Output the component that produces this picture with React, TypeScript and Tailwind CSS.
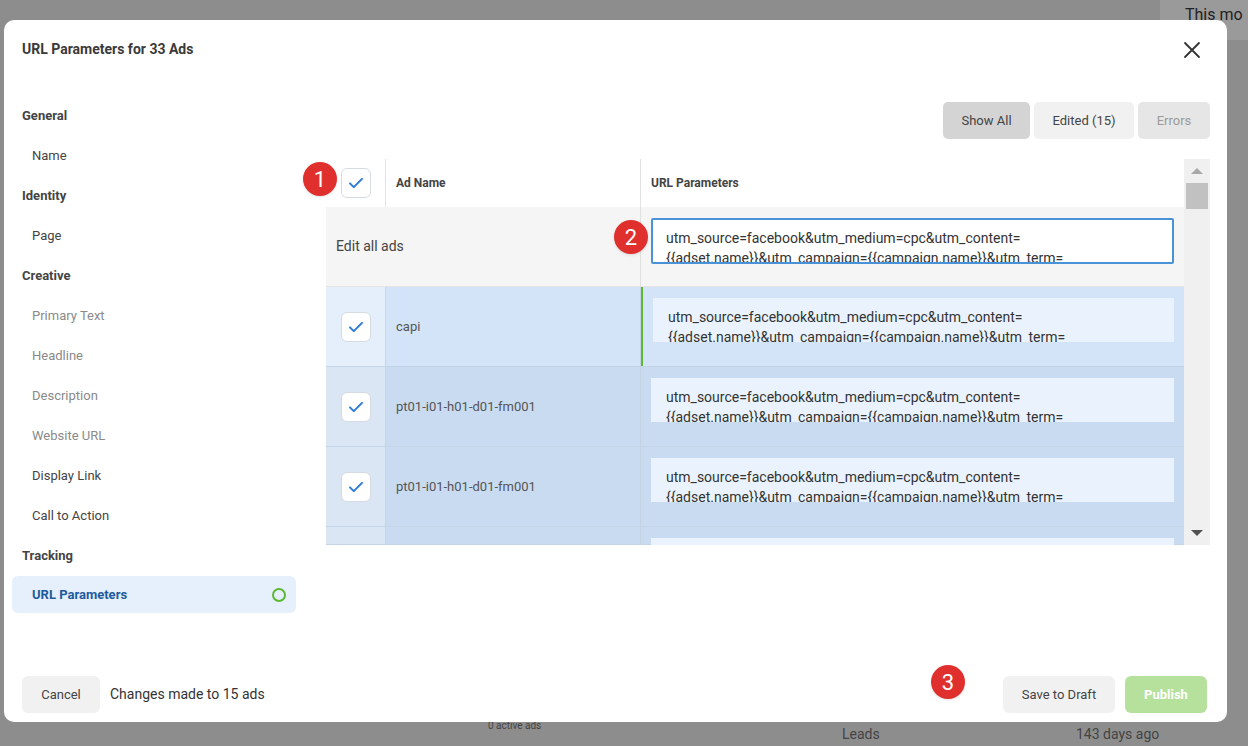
import React from 'react';

const URL_TEXT1 = 'utm_source=facebook&utm_medium=cpc&utm_content=';
const URL_TEXT2 = '{{adset.name}}&utm_campaign={{campaign.name}}&utm_term=';

function Check() {
  return (
    <div className="w-[30px] h-[30px] rounded-[6px] bg-white border border-[#d6dbe2] flex items-center justify-center">
      <svg width="18" height="18" viewBox="0 0 24 24" fill="none" stroke="#2b7bd6" strokeWidth="2.6" strokeLinecap="round" strokeLinejoin="round">
        <path d="M4 12.5l5 5L20 6.5" />
      </svg>
    </div>
  );
}

function Badge({ n, className }: { n: number; className: string }) {
  return (
    <div className={`absolute w-[34px] h-[34px] rounded-full bg-[#e0302e] text-white text-[22px] flex items-center justify-center shadow ${className}`}>
      {n}
    </div>
  );
}

const nav: { head: string; items: { label: string; dim?: boolean }[] }[] = [
  { head: 'General', items: [{ label: 'Name' }] },
  { head: 'Identity', items: [{ label: 'Page' }] },
  {
    head: 'Creative',
    items: [
      { label: 'Primary Text', dim: true },
      { label: 'Headline', dim: true },
      { label: 'Description', dim: true },
      { label: 'Website URL', dim: true },
      { label: 'Display Link' },
      { label: 'Call to Action' },
    ],
  },
];

function Row({ name, first, last }: { name: string; first?: boolean; last?: boolean }) {
  return (
    <div className={`flex ${last ? 'h-[18px]' : 'h-[80px]'} border-b border-[#c5d5e8]`}>
      <div className={`w-[60px] flex items-center justify-center border-r border-[#c9d6e6] ${first ? 'bg-[#e4effb]' : 'bg-[#dae6f4]'}`}>
        {!last && <Check />}
      </div>
      <div className={`w-[255px] flex items-center pl-[10px] text-[13px] text-[#555] border-r border-[#c5d2e2] ${first ? 'bg-[#d3e4f8]' : 'bg-[#c9dbf1]'}`}>
        {!last && name}
      </div>
      <div className={`flex-1 pl-[10px] pr-[10px] pt-[11px] ${first ? 'bg-[#d3e4f8] border-l-2 border-[#5cb833]' : 'bg-[#c9dbf1]'}`}>
        <div className="h-[44px] bg-[#eaf3fd] px-[15px] pt-[9px] text-[14px] leading-[20px] text-[#333] overflow-hidden whitespace-nowrap">
          <div>{URL_TEXT1}</div>
          <div>{URL_TEXT2}</div>
        </div>
      </div>
    </div>
  );
}

export default function App() {
  return (
    <div className="relative w-[1248px] h-[746px] overflow-hidden bg-[#8d8d8d] font-[Roboto,sans-serif] pt-[20px] pl-[4px]">
      {/* page behind the overlay */}
      <div className="absolute right-0 top-0 w-[88px] h-[40px] bg-[#9a9a9a] pl-[25px] pt-[3px] text-[16px] text-[#222]">This mo</div>
      <div className="absolute left-[488px] top-[718px] text-[10px] text-[#444]">0 active ads</div>
      <div className="absolute left-[842px] top-[724px] text-[14px] text-[#444]">Leads</div>
      <div className="absolute left-[1076px] top-[724px] text-[14px] text-[#444]">143 days ago</div>

      <div className="relative w-[1223px] h-[702px] bg-white rounded-[10px] flex flex-col">
        <div className="flex items-center justify-between pl-[18px] pr-[26px] pt-[19px]">
          <div className="text-[14px] font-bold text-[#3a3a3a]">URL Parameters for 33 Ads</div>
          <svg width="18" height="18" viewBox="0 0 18 18" stroke="#333" strokeWidth="1.8" strokeLinecap="round">
            <path d="M2 2l14 14M16 2L2 16" />
          </svg>
        </div>

        <div className="flex flex-1 pt-[36px]">
          {/* sidebar */}
          <div className="w-[284px] ml-[8px] flex flex-col">
            {nav.map((s) => (
              <div key={s.head}>
                <div className="h-[40px] flex items-center pl-[10px] text-[13px] font-bold text-[#444]">{s.head}</div>
                {s.items.map((i) => (
                  <div key={i.label} className={`h-[40px] flex items-center pl-[20px] text-[13px] ${i.dim ? 'text-[#8a8a8a]' : 'text-[#444]'}`}>
                    {i.label}
                  </div>
                ))}
              </div>
            ))}
            <div className="h-[40px] flex items-center pl-[10px] text-[13px] font-bold text-[#444]">Tracking</div>
            <div className="h-[37px] flex items-center justify-between pl-[20px] pr-[10px] rounded-[6px] bg-[#e5f0fc] text-[13px] font-bold text-[#1e5a9c]">
              URL Parameters
              <div className="w-[14px] h-[14px] rounded-full border-2 border-[#5cb833]" />
            </div>
          </div>

          {/* main */}
          <div className="flex-1 ml-[30px] mr-[17px] flex flex-col">
            <div className="flex justify-end gap-[4px] mt-[6px]">
              <div className="w-[87px] h-[37px] rounded-[5px] bg-[#d4d4d4] flex items-center justify-center text-[13px] text-[#444]">Show All</div>
              <div className="w-[100px] h-[37px] rounded-[5px] bg-[#f1f1f1] flex items-center justify-center text-[13px] text-[#444]">Edited (15)</div>
              <div className="w-[72px] h-[37px] rounded-[5px] bg-[#e6e6e6] flex items-center justify-center text-[13px] text-[#9a9a9a]">Errors</div>
            </div>

            <div className="relative mt-[20px] h-[386px] flex">
              <div className="flex-1 flex flex-col overflow-hidden">
                <div className="flex h-[48px] bg-white">
                  <div className="w-[60px] flex items-center justify-center border-r border-[#e2e2e2]"><Check /></div>
                  <div className="w-[255px] flex items-center pl-[10px] text-[12px] font-bold text-[#444] border-r border-[#e2e2e2]">Ad Name</div>
                  <div className="flex-1 flex items-center pl-[10px] text-[12px] font-bold text-[#444]">URL Parameters</div>
                </div>
                <div className="flex h-[80px] bg-[#f5f5f5] border-b border-[#e4e4e4]">
                  <div className="w-[315px] flex items-center pl-[10px] text-[14px] text-[#444] border-r border-[#e0e0e0]">Edit all ads</div>
                  <div className="flex-1 pl-[10px] pr-[10px] pt-[11px]">
                    <div className="h-[46px] bg-white border-2 border-[#4a92d8] rounded-[2px] px-[13px] pt-[8px] text-[14px] leading-[20px] text-[#333] overflow-hidden whitespace-nowrap">
                      <div>{URL_TEXT1}</div>
                      <div>{URL_TEXT2}</div>
                    </div>
                  </div>
                </div>
                <Row name="capi" first />
                <Row name="pt01-i01-h01-d01-fm001" />
                <Row name="pt01-i01-h01-d01-fm001" />
                <Row name="" last />
              </div>
              <div className="w-[26px] bg-[#f0f0f0] flex flex-col items-center">
                <div className="h-[24px] flex items-center">
                  <div className="w-0 h-0 border-l-[6px] border-r-[6px] border-b-[6px] border-l-transparent border-r-transparent border-b-[#a8a8a8]" />
                </div>
                <div className="w-[22px] h-[26px] bg-[#c1c1c1]" />
                <div className="flex-1" />
                <div className="h-[24px] flex items-center">
                  <div className="w-0 h-0 border-l-[6px] border-r-[6px] border-t-[6px] border-l-transparent border-r-transparent border-t-[#505050]" />
                </div>
              </div>
              <Badge n={1} className="left-[-23px] top-[3px]" />
              <Badge n={2} className="left-[288px] top-[61px]" />
            </div>
          </div>
        </div>

        {/* footer */}
        <div className="relative flex items-center justify-between pl-[18px] pr-[20px] pb-[9px]">
          <div className="flex items-center gap-[10px]">
            <div className="w-[78px] h-[37px] rounded-[6px] bg-[#f1f1f1] flex items-center justify-center text-[13px] text-[#444]">Cancel</div>
            <div className="text-[14px] text-[#333]">Changes made to 15 ads</div>
          </div>
          <div className="flex items-center gap-[10px]">
            <div className="w-[112px] h-[37px] rounded-[6px] bg-[#f1f1f1] flex items-center justify-center text-[13px] text-[#444]">Save to Draft</div>
            <div className="w-[82px] h-[37px] rounded-[6px] bg-[#b6e19c] flex items-center justify-center text-[13px] font-bold text-white">Publish</div>
          </div>
          <Badge n={3} className="left-[927px] top-[-11px]" />
        </div>
      </div>
    </div>
  );
}
